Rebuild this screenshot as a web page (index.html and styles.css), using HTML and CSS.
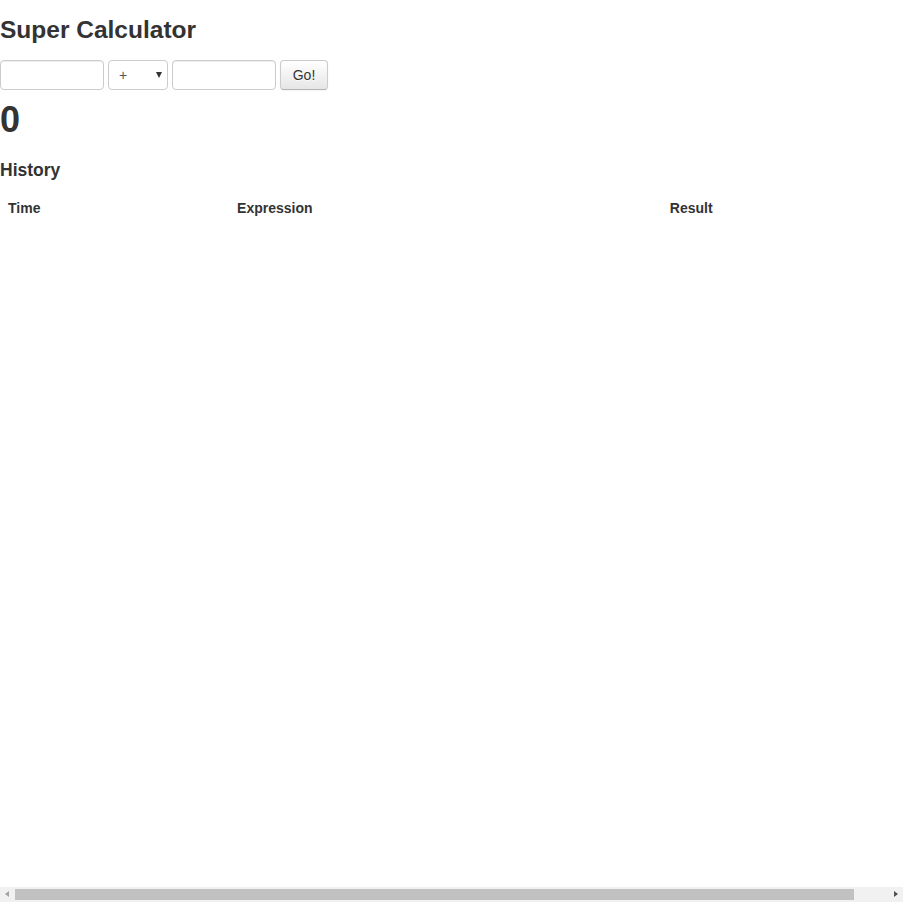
FILE: index.html
```html
<!DOCTYPE html>
<html lang="en">
<head>
<meta charset="utf-8">
<title>Super Calculator</title>
<link rel="stylesheet" href="styles.css">
</head>
<body>
<div class="container">
  <h3 class="title">Super Calculator</h3>
  <form class="calc">
    <input class="field" type="text">
    <span class="select-wrap">
      <select class="operator">
        <option>+</option>
        <option>-</option>
        <option>*</option>
        <option>/</option>
      </select>
    </span>
    <input class="field" type="text">
    <button class="btn" type="button">Go!</button>
  </form>
  <h1 class="result">0</h1>
  <h4 class="history-title">History</h4>
  <table class="history">
    <thead>
      <tr>
        <th>Time</th>
        <th>Expression</th>
        <th>Result</th>
      </tr>
    </thead>
    <tbody></tbody>
  </table>
</div>
<div class="hscroll" aria-hidden="true">
  <span class="arrow arrow-left"></span>
  <span class="track"><span class="thumb"></span></span>
  <span class="arrow arrow-right"></span>
</div>
</body>
</html>
```

FILE: styles.css
```css
html, body {
  margin: 0;
  padding: 0;
}

body {
  font-family: "Liberation Sans", Arial, sans-serif;
  font-size: 14px;
  line-height: 20px;
  color: #333;
  background: #fff;
  overflow: hidden;
}

.container {
  width: 940px;
  margin: 0 auto;
}

.title {
  margin: 10px 0;
  font-size: 24.5px;
  line-height: 40px;
  font-weight: bold;
}

.calc {
  display: flex;
  gap: 4px;
  height: 30px;
  margin: 0;
}

.field {
  box-sizing: border-box;
  width: 104px;
  height: 30px;
  padding: 4px 6px;
  border: 1px solid #ccc;
  border-radius: 4px;
  box-shadow: inset 0 1px 1px rgba(0, 0, 0, 0.075);
  font-family: inherit;
  font-size: 14px;
  color: #555;
  background: #fff;
  margin: 0;
}

.select-wrap {
  position: relative;
  display: block;
  width: 60px;
  height: 30px;
}

.select-wrap::after {
  content: "";
  position: absolute;
  left: 48px;
  top: 12px;
  width: 0;
  height: 0;
  border-left: 3.5px solid transparent;
  border-right: 3.5px solid transparent;
  border-top: 6px solid #333;
  pointer-events: none;
}

.operator {
  -webkit-appearance: none;
  appearance: none;
  box-sizing: border-box;
  width: 60px;
  height: 30px;
  margin: 0;
  padding: 4px 6px 4px 10px;
  border: 1px solid #ccc;
  border-radius: 4px;
  background: #fff;
  font-family: inherit;
  font-size: 14px;
  color: #555;
}

.btn {
  box-sizing: border-box;
  width: 48px;
  height: 30px;
  margin: 0;
  padding: 4px 0;
  font-family: inherit;
  font-size: 14px;
  line-height: 20px;
  color: #333;
  text-shadow: 0 1px 1px rgba(255, 255, 255, 0.75);
  background: linear-gradient(to bottom, #ffffff, #e6e6e6);
  border: 1px solid #ccc;
  border-bottom-color: #b3b3b3;
  border-radius: 4px;
  box-shadow: inset 0 1px 0 rgba(255, 255, 255, 0.2), 0 1px 2px rgba(0, 0, 0, 0.05);
}

.result {
  margin: 10px 0 20px;
  font-size: 36px;
  line-height: 40px;
  font-weight: bold;
}

.history-title {
  margin: 0 0 10px;
  font-size: 17.5px;
  line-height: 20px;
  font-weight: bold;
}

.history {
  width: 100%;
  border-collapse: collapse;
  border-spacing: 0;
}

.history th {
  padding: 8px;
  line-height: 20px;
  text-align: left;
  vertical-align: bottom;
  font-weight: bold;
}

/* imitation of the browser's horizontal scrollbar */
.hscroll {
  position: fixed;
  left: 0;
  right: 0;
  bottom: 0;
  height: 15px;
  display: flex;
  align-items: center;
  background: #f1f1f1;
}

.arrow {
  flex: 0 0 15px;
  height: 15px;
  position: relative;
}

.arrow::before {
  content: "";
  position: absolute;
  top: 4px;
  width: 0;
  height: 0;
  border-top: 3.5px solid transparent;
  border-bottom: 3.5px solid transparent;
}

.arrow-left::before {
  left: 5px;
  border-right: 4px solid #a3a3a3;
}

.arrow-right::before {
  left: 6px;
  border-left: 4px solid #505050;
}

.track {
  flex: 1;
  height: 15px;
  display: flex;
  align-items: center;
}

.thumb {
  display: block;
  width: 839px;
  height: 11px;
  background: #c1c1c1;
}
```
